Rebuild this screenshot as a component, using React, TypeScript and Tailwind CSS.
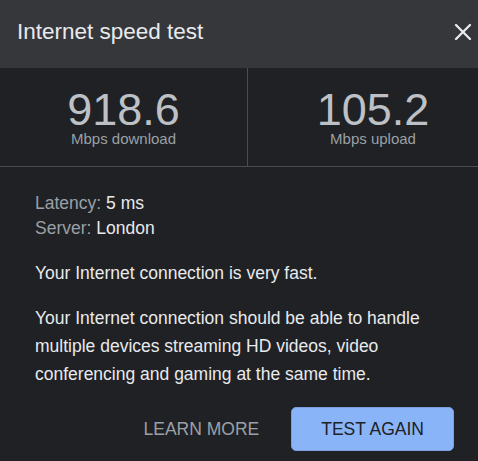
import { X } from "lucide-react";

function Stat({ value, label, width }: { value: string; label: string; width: string }) {
  return (
    <div className={`flex shrink-0 flex-col items-center pt-[21px] ${width}`}>
      <div className="text-[45px] leading-[42px] text-[#bdc1c6]">{value}</div>
      <div className="mt-[1px] text-[15px] leading-[13px] text-[#9aa0a6]">{label}</div>
    </div>
  );
}

export default function App() {
  return (
    <div className="h-[461px] w-[478px] overflow-hidden bg-[#202124] font-['Liberation_Sans',Arial,sans-serif]">
      {/* header */}
      <div className="flex h-[68px] items-center justify-between bg-[#36373b] pb-[4px] pl-[17px]">
        <h1 className="text-[22.5px] leading-none text-[#e8eaed]">Internet speed test</h1>
        <button className="flex h-[30px] w-[30px] items-center justify-center text-[#e8eaed]">
          <X size={28} strokeWidth={2} />
        </button>
      </div>

      {/* results */}
      <div className="flex h-[99px] border-b border-[#4a4c50]">
        <Stat value="918.6" label="Mbps download" width="w-[247px]" />
        <div className="w-px shrink-0 bg-[#4a4c50]" />
        <Stat value="105.2" label="Mbps upload" width="w-[250px]" />
      </div>

      {/* details */}
      <div className="px-[35px] pt-[24px] text-[17.5px]">
        <div className="leading-[25px]">
          <div>
            <span className="text-[#9aa0a6]">Latency: </span>
            <span className="text-[#e8eaed]">5 ms</span>
          </div>
          <div>
            <span className="text-[#9aa0a6]">Server: </span>
            <span className="text-[#e8eaed]">London</span>
          </div>
        </div>
        <p className="mt-[18px] leading-[28px] text-[#e8eaed]">Your Internet connection is very fast.</p>
        <p className="mt-[17px] leading-[28px] text-[#e8eaed]">
          Your Internet connection should be able to handle multiple devices streaming HD videos, video
          conferencing and gaming at the same time.
        </p>
      </div>

      <div className="mt-[19px] flex justify-end gap-[2px] pr-[24px]">
        <button className="h-[44px] px-[30px] text-[17.5px] text-[#9aa0a6]">LEARN MORE</button>
        <button className="h-[44px] rounded-[5px] border border-[#7a9fdc] bg-[#8ab4f8] px-[29px] text-[17.5px] text-[#202124]">
          TEST AGAIN
        </button>
      </div>
    </div>
  );
}
